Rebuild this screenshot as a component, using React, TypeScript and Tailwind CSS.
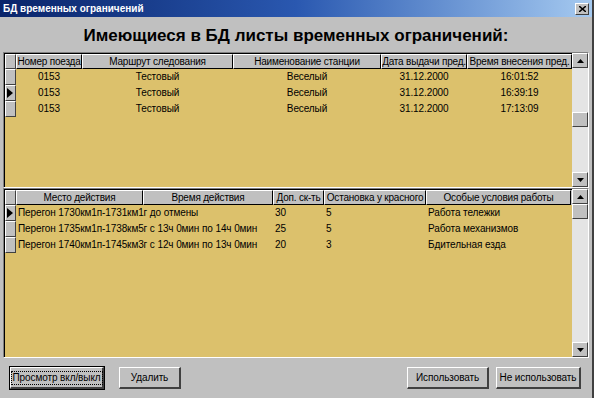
import React from "react";

const raised =
  "border-t border-l border-t-white border-l-white border-b border-r border-b-[#404040] border-r-[#404040]";

function ArrowUp() {
  return (
    <svg width="7" height="4" viewBox="0 0 7 4">
      <polygon points="3.5,0 7,4 0,4" fill="#000" />
    </svg>
  );
}
function ArrowDown() {
  return (
    <svg width="7" height="4" viewBox="0 0 7 4">
      <polygon points="0,0 7,0 3.5,4" fill="#000" />
    </svg>
  );
}

function ScrollBar({ thumbTop }: { thumbTop: number }) {
  return (
    <div className="w-[16px] flex flex-col bg-[#e4e4e4] shrink-0">
      <div className={`h-[15px] bg-[#c0c0c0] flex items-center justify-center ${raised}`}>
        <ArrowUp />
      </div>
      <div className="flex-1 relative">
        <div
          className={`absolute left-0 right-0 h-[15px] bg-[#c0c0c0] ${raised}`}
          style={{ top: thumbTop }}
        />
      </div>
      <div className={`h-[15px] bg-[#c0c0c0] flex items-center justify-center ${raised}`}>
        <ArrowDown />
      </div>
    </div>
  );
}

type Col = { title: string; w: number };

function Grid({
  cols,
  rows,
  align,
  height,
  thumbTop,
  selected,
}: {
  cols: Col[];
  rows: string[][];
  align: "center" | "left";
  height: number;
  thumbTop: number;
  selected: number;
}) {
  return (
    <div
      className="flex border-t border-l border-t-[#808080] border-l-[#808080] border-b border-r border-b-white border-r-white bg-[#dcc16c]"
      style={{ height }}
    >
      <div className="flex-1 flex flex-col border border-black border-r-0 border-b-0 overflow-hidden">
        <div className="flex h-[15px] bg-[#c0c0c0] shrink-0">
          <div className={`w-[11px] shrink-0 ${raised}`} />
          {cols.map((c) => (
            <div
              key={c.title}
              className="shrink-0 flex items-center justify-center text-[10px] tracking-[-0.2px] leading-none text-black whitespace-nowrap overflow-hidden border-r border-black border-b border-t border-l border-t-white border-l-white"
              style={{ width: c.w }}
            >
              {c.title}
            </div>
          ))}
          <div className="flex-1 bg-[#c0c0c0]" />
        </div>
        {rows.map((r, i) => (
          <div key={i} className="flex h-[16px] shrink-0">
            <div className={`w-[11px] shrink-0 bg-[#c0c0c0] flex items-center ${raised}`}>
              {i === selected && (
                <svg width="6" height="10" viewBox="0 0 6 10" className="ml-[1px]">
                  <polygon points="0,0 6,5 0,10" fill="#000" />
                </svg>
              )}
            </div>
            {r.map((cell, j) => (
              <div
                key={j}
                className={`shrink-0 flex items-center text-[10px] tracking-[-0.1px] leading-none text-black whitespace-nowrap ${
                  align === "center" ? "justify-center" : "justify-start pl-[2px]"
                }`}
                style={{ width: cols[j].w }}
              >
                {cell}
              </div>
            ))}
          </div>
        ))}
        <div className="flex-1" />
      </div>
      <ScrollBar thumbTop={thumbTop} />
    </div>
  );
}

function Btn({ children, w, focused }: { children: React.ReactNode; w: number; focused?: boolean }) {
  return (
    <div
      className={`h-[22px] bg-[#c0c0c0] flex items-center justify-center text-[10px] tracking-[-0.1px] text-black whitespace-nowrap ${
        focused ? "outline outline-1 outline-black" : ""
      } border-t border-l border-t-white border-l-white border-b-2 border-r-2 border-b-[#404040] border-r-[#404040]`}
      style={{ width: w }}
    >
      <span className={focused ? "border border-dotted border-black px-[1px] leading-[12px]" : ""}>{children}</span>
    </div>
  );
}

export default function App() {
  const font = { fontFamily: '"Liberation Sans", Arial, sans-serif' };
  return (
    <div className="w-[594px] h-[398px] bg-[#c0c0c0] flex flex-col overflow-hidden border-r-2 border-r-[#404040]" style={font}>
      <div className="h-[17px] shrink-0 flex items-center bg-gradient-to-r from-[#0a246a] via-[#2a58b0] to-[#a6caf0] pl-[3px] pr-[3px]">
        <span className="text-white font-bold text-[10px] leading-none flex-1">БД временных ограничений</span>
        <div className={`w-[14px] h-[12px] bg-[#c0c0c0] flex items-center justify-center ${raised}`}>
          <svg width="7" height="6" viewBox="0 0 7 6">
            <path d="M0 0 L7 6 M7 0 L0 6" stroke="#000" strokeWidth="1.5" />
          </svg>
        </div>
      </div>
      <div className="h-[35px] shrink-0 flex items-center justify-center pt-[1px]">
        <span className="font-bold text-[17px] text-black leading-none">
          Имеющиеся в БД листы временных ограничений:
        </span>
      </div>
      <div className="pl-[3px] pr-[3px] flex flex-col">
        <Grid
          height={136}
          thumbTop={44}
          selected={1}
          align="center"
          cols={[
            { title: "Номер поезда", w: 66 },
            { title: "Маршрут следования", w: 151 },
            { title: "Наименование станции", w: 148 },
            { title: "Дата выдачи пред.", w: 86 },
            { title: "Время внесения пред.", w: 105 },
          ]}
          rows={[
            ["0153", "Тестовый", "Веселый", "31.12.2000", "16:01:52"],
            ["0153", "Тестовый", "Веселый", "31.12.2000", "16:39:19"],
            ["0153", "Тестовый", "Веселый", "31.12.2000", "17:13:09"],
          ]}
        />
        <Grid
          height={170}
          thumbTop={0}
          selected={0}
          align="left"
          cols={[
            { title: "Место действия", w: 127 },
            { title: "Время действия", w: 130 },
            { title: "Доп. ск-ть", w: 51 },
            { title: "Остановка у красного", w: 102 },
            { title: "Особые условия работы", w: 145 },
          ]}
          rows={[
            ["Перегон 1730км1п-1731км1г до отмены", "", "30", "5", "Работа тележки"],
            ["Перегон 1735км1п-1738км5г с 13ч 0мин по 14ч 0мин", "", "25", "5", "Работа механизмов"],
            ["Перегон 1740км1п-1745км3г с 12ч 0мин по 13ч 0мин", "", "20", "3", "Бдительная езда"],
          ]}
        />
      </div>
      <div className="flex-1 flex items-center pl-[10px] pr-[11px] gap-[15px]">
        <Btn w={94} focused>
          Просмотр вкл/выкл
        </Btn>
        <Btn w={62}>Удалить</Btn>
        <div className="flex-1" />
        <div className="flex gap-[7px]">
          <Btn w={82}>Использовать</Btn>
          <Btn w={85}>Не использовать</Btn>
        </div>
      </div>
    </div>
  );
}
